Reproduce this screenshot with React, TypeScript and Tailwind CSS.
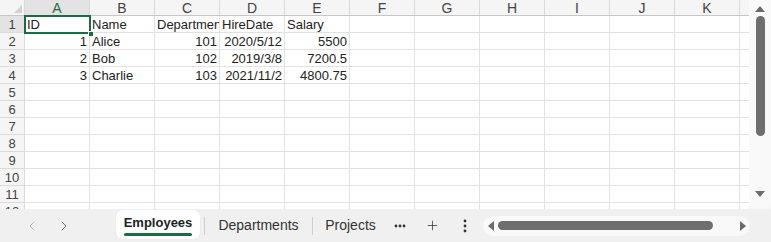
import { ChevronLeft, ChevronRight, Plus } from 'lucide-react';

const cols = ['A', 'B', 'C', 'D', 'E', 'F', 'G', 'H', 'I', 'J', 'K'];

type Cell = { v: string; num?: boolean };

const data: Cell[][] = [
    [{ v: 'ID' }, { v: 'Name' }, { v: 'Departmen' }, { v: 'HireDate' }, { v: 'Salary' }],
    [{ v: '1', num: true }, { v: 'Alice' }, { v: '101', num: true }, { v: '2020/5/12', num: true }, { v: '5500', num: true }],
    [{ v: '2', num: true }, { v: 'Bob' }, { v: '102', num: true }, { v: '2019/3/8', num: true }, { v: '7200.5', num: true }],
    [{ v: '3', num: true }, { v: 'Charlie' }, { v: '103', num: true }, { v: '2021/11/2', num: true }, { v: '4800.75', num: true }],
];

const rows = Array.from({ length: 12 }, (_, i) => i + 1);

function Triangle({ dir }: { dir: 'up' | 'down' | 'left' | 'right' }) {
    const pts = {
        up: '0,7 5,1 10,7',
        down: '0,1 5,7 10,1',
        left: '7,0 1,5 7,10',
        right: '1,0 7,5 1,10',
    }[dir];
    const size = dir === 'up' || dir === 'down' ? { w: 10, h: 8 } : { w: 8, h: 10 };
    return (
        <svg width={size.w} height={size.h} viewBox={`0 0 ${size.w} ${size.h}`}>
            <polygon points={pts} fill="#6b6b6b" />
        </svg>
    );
}

export default function App() {
    return (
        <div
            className="w-[771px] h-[242px] flex flex-col bg-white overflow-hidden text-[#222]"
            style={{ fontFamily: '"Liberation Sans", Arial, sans-serif' }}
        >
            {/* Sheet + vertical scrollbar */}
            <div className="flex h-[209px]">
                <div className="relative w-[749px] h-full overflow-hidden">
                    {/* Column headers */}
                    <div className="flex h-[16px] bg-[#f5f5f5] border-b border-[#c6c6c6]">
                        <div className="relative w-[25px] shrink-0 border-r border-[#dadada]">
                            <svg className="absolute right-[2px] bottom-[2px]" width="8" height="8" viewBox="0 0 8 8">
                                <polygon points="8,0 8,8 0,8" fill="#d2d2d2" />
                            </svg>
                        </div>
                        {cols.map((c, i) => (
                            <div
                                key={c}
                                className={`w-[65px] shrink-0 flex items-center justify-center text-[14px] leading-none border-r border-[#dadada] ${
                                    i === 0 ? 'bg-[#e3e3e3] text-[#1e6b41]' : 'text-[#444]'
                                }`}
                            >
                                {c}
                            </div>
                        ))}
                        <div className="w-[9px] shrink-0" />
                    </div>

                    {/* Rows */}
                    {rows.map((r) => (
                        <div key={r} className="flex h-[17px]">
                            <div
                                className={`w-[25px] shrink-0 flex items-center justify-center text-[13px] leading-none text-[#444] border-r border-b border-[#dadada] ${
                                    r === 1 ? 'bg-[#e3e3e3]' : 'bg-[#f5f5f5]'
                                }`}
                            >
                                {r}
                            </div>
                            {cols.map((c, ci) => {
                                const cell = data[r - 1]?.[ci];
                                return (
                                    <div
                                        key={c}
                                        className={`w-[65px] shrink-0 overflow-hidden whitespace-nowrap flex items-center px-[2px] text-[13px] leading-none border-r border-b border-[#e1e1e1] ${
                                            cell?.num ? 'justify-end' : 'justify-start'
                                        }`}
                                    >
                                        {cell?.v}
                                    </div>
                                );
                            })}
                            <div className="w-[9px] shrink-0 border-b border-[#e1e1e1]" />
                        </div>
                    ))}

                    {/* Selection box on A1 */}
                    <div className="absolute left-[24px] top-[15px] w-[67px] h-[19px] border-2 border-[#1e6b41]" />
                    <div className="absolute left-[88px] top-[31px] w-[6px] h-[6px] bg-[#1e6b41] border border-white" />
                </div>

                {/* Vertical scrollbar */}
                <div className="w-[22px] h-full bg-[#f3f3f3]">
                    <div className="h-[212px] bg-[#f9f9f9] rounded-b-[8px] flex flex-col items-center pt-[5px]">
                        <Triangle dir="up" />
                        <div className="mt-[3px] w-[9px] h-[120px] rounded-full bg-[#6e6e6e]" />
                        <div className="flex-1" />
                        <div className="mb-[14px]">
                            <Triangle dir="down" />
                        </div>
                    </div>
                </div>
            </div>

            {/* Sheet tabs bar */}
            <div className="flex items-center h-[33px] bg-[#f0f0f0] text-[14px] text-[#333]">
                <div className="w-[116px] shrink-0 flex items-center">
                    <ChevronLeft className="ml-[24px]" size={16} strokeWidth={1.1} color="#a0a0a0" />
                    <ChevronRight className="ml-[16px]" size={16} strokeWidth={1.1} color="#444" />
                </div>
                <div className="w-[84px] h-[29px] shrink-0 self-start mt-[1px] bg-white rounded-[6px] shadow-[0_0_1px_rgba(0,0,0,0.15)] flex flex-col items-center justify-center">
                    <span className="font-bold text-[13px] text-[#222] leading-none mt-[3px]">Employees</span>
                    <span className="mt-[4px] w-[68px] h-[2.5px] rounded-full bg-[#1e6b41]" />
                </div>
                <div className="ml-[4px] w-px h-[18px] bg-[#cfcfcf] shrink-0" />
                <div className="w-[107px] shrink-0 text-center">Departments</div>
                <div className="w-px h-[18px] bg-[#cfcfcf] shrink-0" />
                <div className="w-[75px] shrink-0 text-center">Projects</div>
                <div className="w-[24px] shrink-0 flex justify-center">
                    <svg width="12" height="4" viewBox="0 0 12 4">
                        <circle cx="2" cy="2" r="1.4" fill="#333" />
                        <circle cx="6" cy="2" r="1.4" fill="#333" />
                        <circle cx="10" cy="2" r="1.4" fill="#333" />
                    </svg>
                </div>
                <div className="w-[40px] shrink-0 flex justify-center">
                    <Plus size={15} strokeWidth={1.2} color="#333" />
                </div>
                <div className="w-[26px] shrink-0 flex justify-center">
                    <svg width="4" height="14" viewBox="0 0 4 14">
                        <circle cx="2" cy="2" r="1.4" fill="#333" />
                        <circle cx="2" cy="7" r="1.4" fill="#333" />
                        <circle cx="2" cy="12" r="1.4" fill="#333" />
                    </svg>
                </div>
                <div className="ml-[5px] w-[267px] h-[20px] shrink-0 rounded-full bg-[#f9f9f9] flex items-center">
                    <div className="ml-[4px]">
                        <Triangle dir="left" />
                    </div>
                    <div className="ml-[3px] w-[215px] h-[9px] rounded-full bg-[#6e6e6e]" />
                    <div className="flex-1" />
                    <div className="mr-[3px]">
                        <Triangle dir="right" />
                    </div>
                </div>
            </div>
        </div>
    );
}
